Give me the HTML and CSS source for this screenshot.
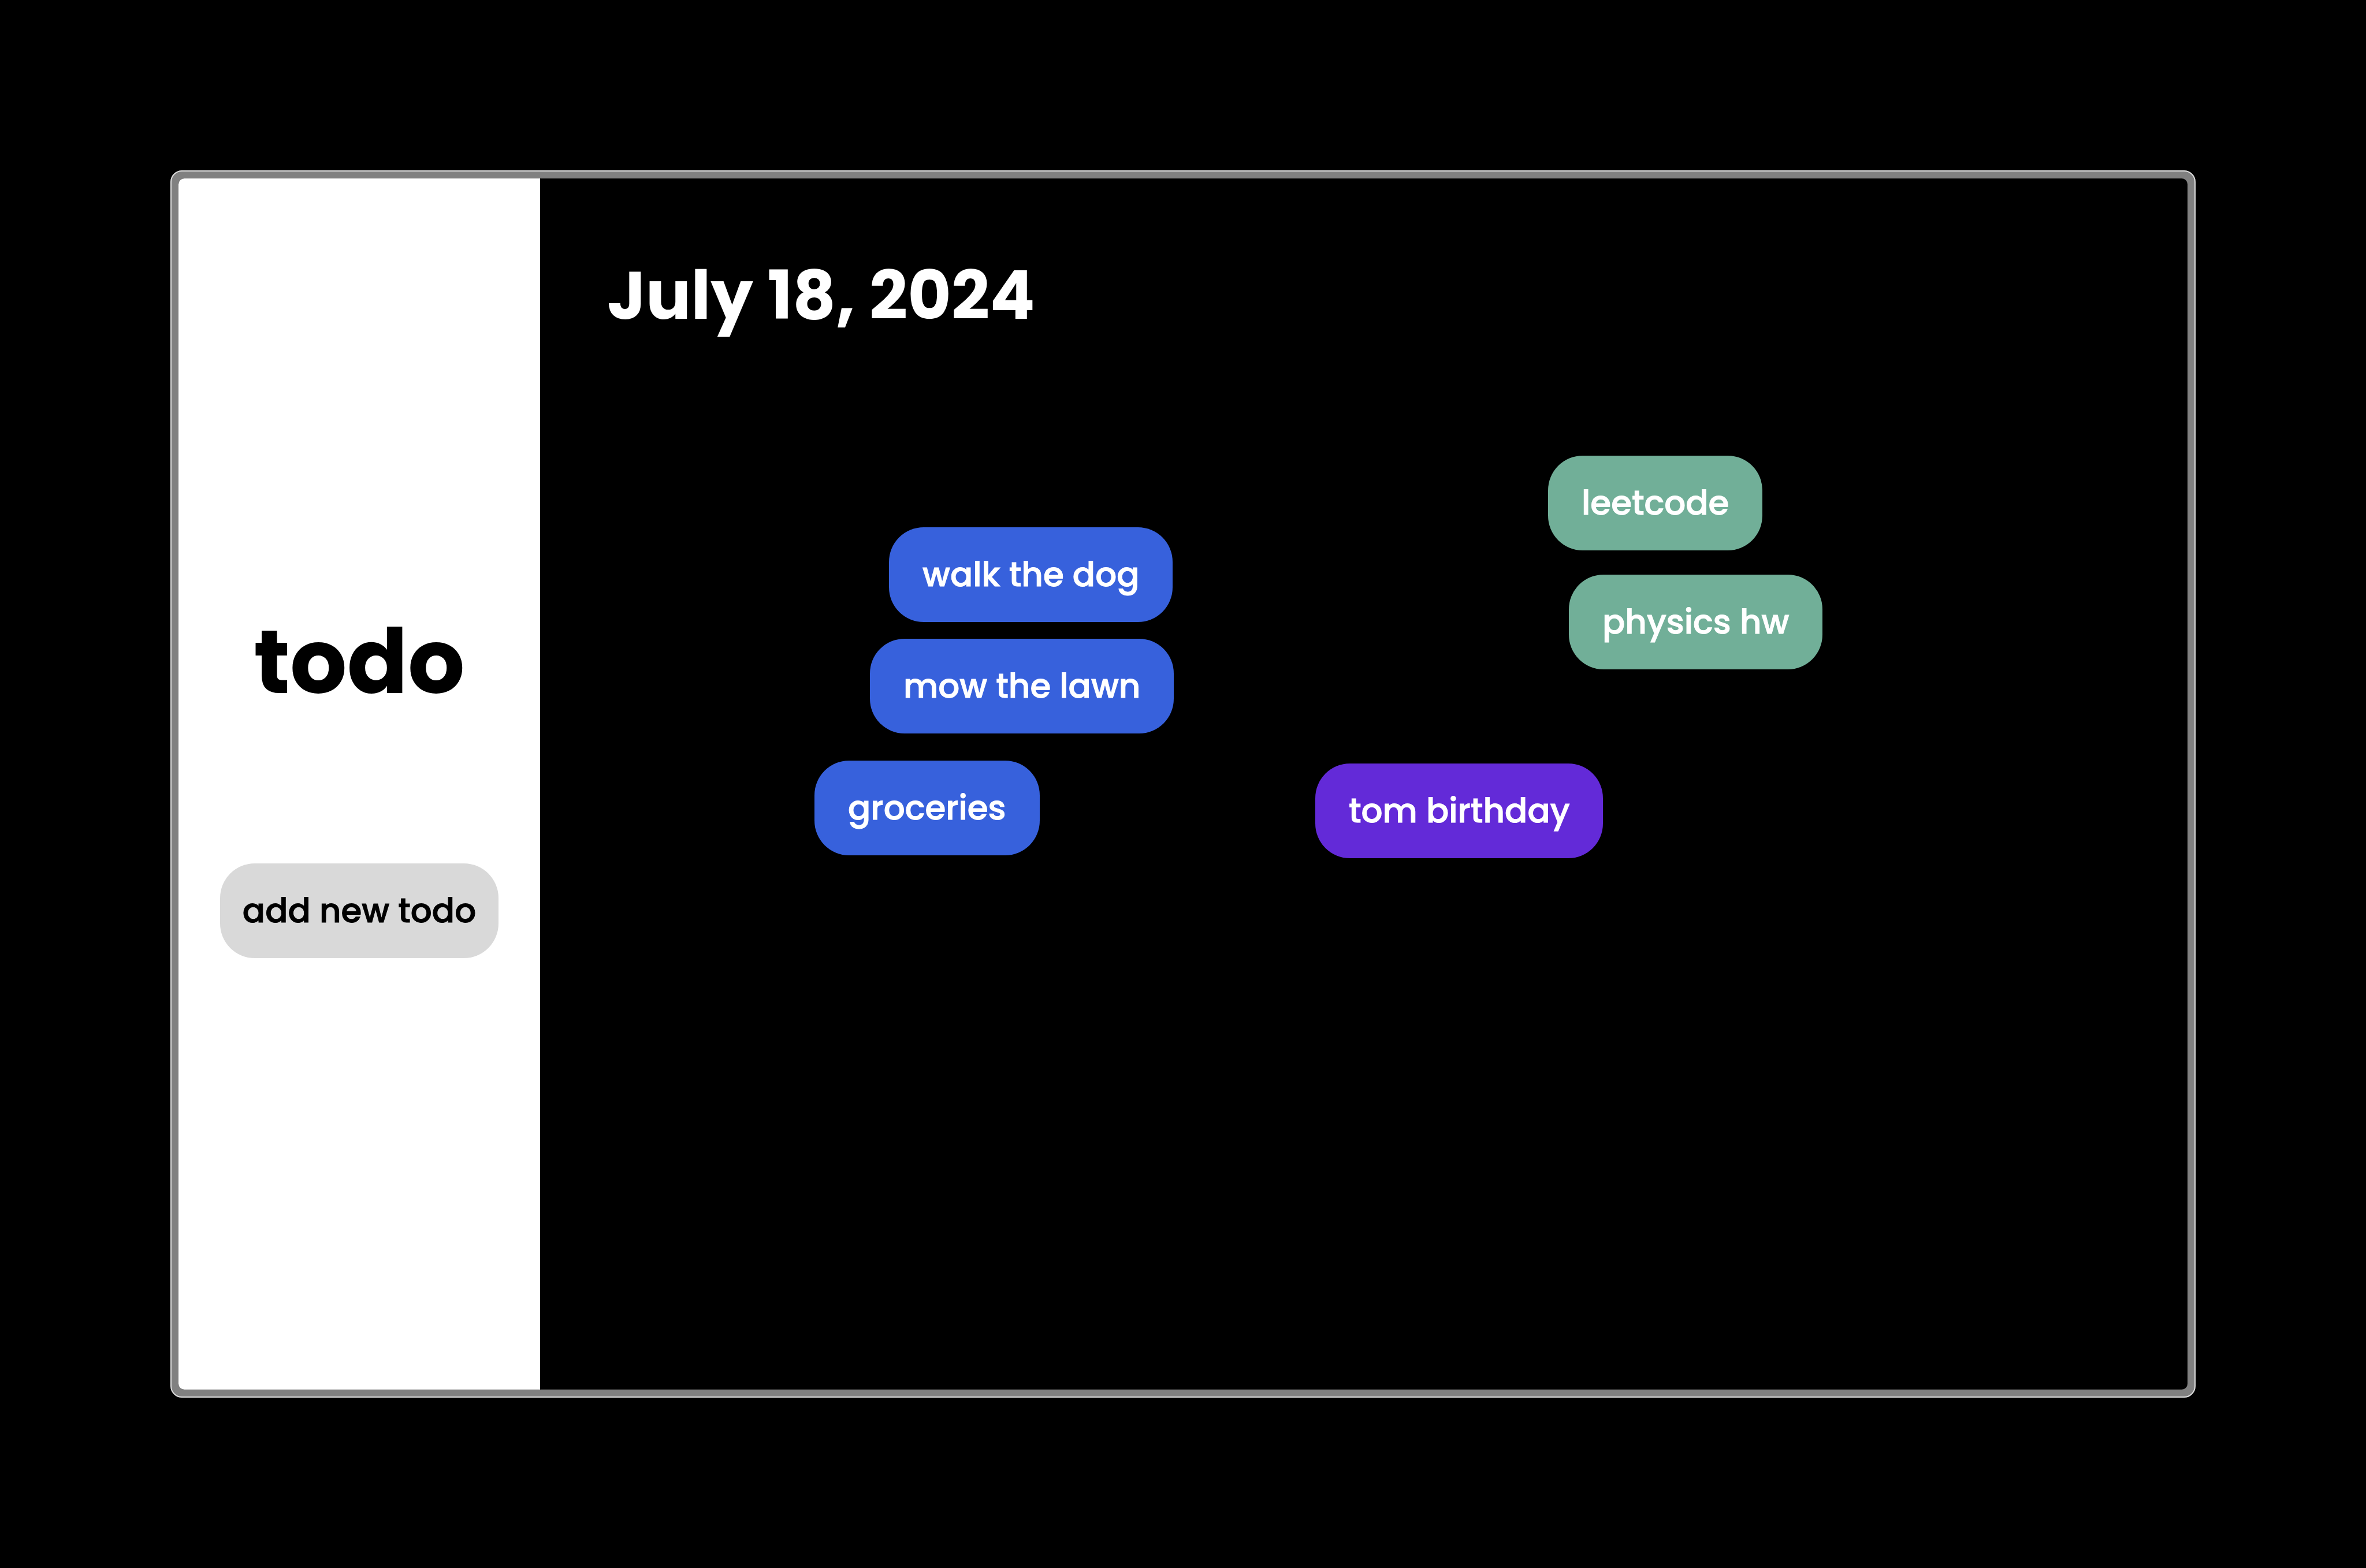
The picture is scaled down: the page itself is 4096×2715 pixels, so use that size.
FILE: index.html
```html
<!DOCTYPE html>
<html lang="en">
<head>
  <meta charset="utf-8">
  <meta name="viewport" content="width=device-width, initial-scale=1">
  <title>todo</title>
  <link rel="stylesheet" href="styles.css">
</head>
<body>
  <div class="window">
    <div class="app">
      <aside class="sidebar">
        <h1 class="logo">todo</h1>
        <button class="add" type="button">add new todo</button>
      </aside>
      <main class="board">
        <h2 class="date">July 18, 2024</h2>
        <div class="note blue" style="left: 604px; top: 604px">walk the dog</div>
        <div class="note blue" style="left: 571px; top: 797px">mow the lawn</div>
        <div class="note blue" style="left: 475px; top: 1008px">groceries</div>
        <div class="note green" style="left: 1745px; top: 480px">leetcode</div>
        <div class="note green" style="left: 1781px; top: 686px">physics hw</div>
        <div class="note purple" style="left: 1342px; top: 1013px">tom birthday</div>
      </main>
    </div>
  </div>
</body>
</html>
```

FILE: styles.css
```css
* {
  box-sizing: border-box;
}

body {
  margin: 0;
  min-height: 100vh;
  padding: 295px;
  display: flex;
  background: #000;
  color: #fff;
  font-family: Poppins, Inter, sans-serif;
}

.window {
  flex: 1;
  display: flex;
  padding: 12px;
  border: 2px solid #dedede;
  border-radius: 20px;
  background: #808080;
}

.app {
  flex: 1;
  display: flex;
  border-radius: 10px;
  overflow: hidden;
  background: #000;
}

.sidebar {
  width: 18%;
  padding-bottom: 26px;
  display: flex;
  flex-direction: column;
  align-items: center;
  justify-content: center;
  gap: 233px;
  background: #fff;
  color: #000;
}

.logo {
  margin: 0;
  font-size: 155px;
  font-weight: 700;
  line-height: 232px;
}

.add,
.note {
  border: 0;
  border-radius: 60px;
  font-family: inherit;
  font-size: 58px;
  font-weight: 500;
  line-height: 84px;
  white-space: nowrap;
  -webkit-text-stroke: 1px currentColor;
}

.add {
  padding: 40px 39px;
  background: #d9d9d9;
  color: #000;
  cursor: pointer;
}

.board {
  position: relative;
  flex: 1;
  padding: 116px;
}

.date {
  margin: 0;
  font-size: 116px;
  font-weight: 700;
  line-height: 174px;
}

.note {
  position: absolute;
  padding: 40px 58px;
  cursor: grab;
}

.blue {
  background: #3761dc;
}

.green {
  background: #71af98;
}

.purple {
  background: #632ad8;
}
```
